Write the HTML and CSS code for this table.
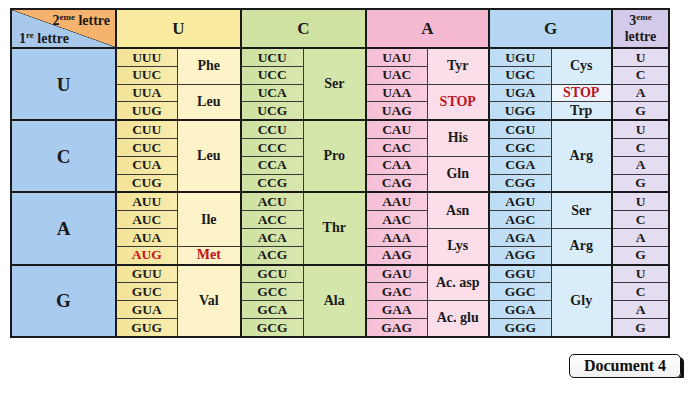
FILE: index.html
```html
<!DOCTYPE html>
<html lang="fr">
<head>
<meta charset="utf-8">
<title>Code génétique</title>
<link rel="stylesheet" href="styles.css">
</head>
<body>
<div class="page">
<table class="code">
<colgroup>
<col class="c-first"><col class="c-codu"><col class="c-aau"><col class="c-codc"><col class="c-aac"><col class="c-coda"><col class="c-aaa"><col class="c-codg"><col class="c-aag"><col class="c-third">
</colgroup>
<thead>
<tr class="head">
<th class="corner"><div class="corner-in"><span class="l2">2<sup>eme</sup> lettre</span><span class="l1">1<sup>re</sup> lettre</span></div></th>
<th colspan="2" class="hy gsep">U</th>
<th colspan="2" class="hg gsep">C</th>
<th colspan="2" class="hp gsep">A</th>
<th colspan="2" class="hb gsep">G</th>
<th class="hv third-h">3<sup>eme</sup><br>lettre</th>
</tr>
</thead>
<tbody>
<!-- U -->
<tr class="grp">
<td rowspan="4" class="first">U</td>
<td class="cy">UUU</td><td rowspan="2" class="ay gsep">Phe</td>
<td class="cg">UCU</td><td rowspan="4" class="ag gsep">Ser</td>
<td class="cp">UAU</td><td rowspan="2" class="ap gsep">Tyr</td>
<td class="cb">UGU</td><td rowspan="2" class="ab gsep">Cys</td>
<td class="v">U</td>
</tr>
<tr><td class="cy">UUC</td><td class="cg">UCC</td><td class="cp">UAC</td><td class="cb">UGC</td><td class="v">C</td></tr>
<tr><td class="cy">UUA</td><td rowspan="2" class="ay gsep">Leu</td><td class="cg">UCA</td><td class="cp">UAA</td><td rowspan="2" class="ap gsep red">STOP</td><td class="cb">UGA</td><td class="aw gsep red">STOP</td><td class="v">A</td></tr>
<tr><td class="cy">UUG</td><td class="cg">UCG</td><td class="cp">UAG</td><td class="cb">UGG</td><td class="ab gsep">Trp</td><td class="v">G</td></tr>
<!-- C -->
<tr class="grp">
<td rowspan="4" class="first">C</td>
<td class="cy">CUU</td><td rowspan="4" class="ay gsep">Leu</td>
<td class="cg">CCU</td><td rowspan="4" class="ag gsep">Pro</td>
<td class="cp">CAU</td><td rowspan="2" class="ap gsep">His</td>
<td class="cb">CGU</td><td rowspan="4" class="ab gsep">Arg</td>
<td class="v">U</td>
</tr>
<tr><td class="cy">CUC</td><td class="cg">CCC</td><td class="cp">CAC</td><td class="cb">CGC</td><td class="v">C</td></tr>
<tr><td class="cy">CUA</td><td class="cg">CCA</td><td class="cp">CAA</td><td rowspan="2" class="ap gsep">Gln</td><td class="cb">CGA</td><td class="v">A</td></tr>
<tr><td class="cy">CUG</td><td class="cg">CCG</td><td class="cp">CAG</td><td class="cb">CGG</td><td class="v">G</td></tr>
<!-- A -->
<tr class="grp">
<td rowspan="4" class="first">A</td>
<td class="cy">AUU</td><td rowspan="3" class="ay gsep">Ile</td>
<td class="cg">ACU</td><td rowspan="4" class="ag gsep">Thr</td>
<td class="cp">AAU</td><td rowspan="2" class="ap gsep">Asn</td>
<td class="cb">AGU</td><td rowspan="2" class="ab gsep">Ser</td>
<td class="v">U</td>
</tr>
<tr><td class="cy">AUC</td><td class="cg">ACC</td><td class="cp">AAC</td><td class="cb">AGC</td><td class="v">C</td></tr>
<tr><td class="cy">AUA</td><td class="cg">ACA</td><td class="cp">AAA</td><td rowspan="2" class="ap gsep">Lys</td><td class="cb">AGA</td><td rowspan="2" class="ab gsep">Arg</td><td class="v">A</td></tr>
<tr><td class="cy red">AUG</td><td class="ay gsep red">Met</td><td class="cg">ACG</td><td class="cp">AAG</td><td class="cb">AGG</td><td class="v">G</td></tr>
<!-- G -->
<tr class="grp">
<td rowspan="4" class="first">G</td>
<td class="cy">GUU</td><td rowspan="4" class="ay gsep">Val</td>
<td class="cg">GCU</td><td rowspan="4" class="ag gsep">Ala</td>
<td class="cp">GAU</td><td rowspan="2" class="ap gsep">Ac. asp</td>
<td class="cb">GGU</td><td rowspan="4" class="ab gsep">Gly</td>
<td class="v">U</td>
</tr>
<tr><td class="cy">GUC</td><td class="cg">GCC</td><td class="cp">GAC</td><td class="cb">GGC</td><td class="v">C</td></tr>
<tr><td class="cy">GUA</td><td class="cg">GCA</td><td class="cp">GAA</td><td rowspan="2" class="ap gsep">Ac. glu</td><td class="cb">GGA</td><td class="v">A</td></tr>
<tr><td class="cy">GUG</td><td class="cg">GCG</td><td class="cp">GAG</td><td class="cb">GGG</td><td class="v">G</td></tr>
</tbody>
</table>
<div class="doc-row"><div class="doc">Document 4</div></div>
</div>
</body>
</html>
```
FILE: styles.css
```css
html, body {
  margin: 0;
  padding: 0;
  background: #ffffff;
}
.page {
  padding: 8px 0 0 10px;
  width: 674px;
  font-family: "Liberation Serif", "DejaVu Serif", serif;
  font-weight: bold;
  color: #1a1a1a;
}
.code {
  border-collapse: collapse;
  table-layout: fixed;
  border: 2px solid #1a1a1a;
}
.c-first { width: 105px; }
.c-codu { width: 61px; }
.c-aau { width: 64px; }
.c-codc { width: 62px; }
.c-aac { width: 63px; }
.c-coda { width: 61px; }
.c-aaa { width: 62px; }
.c-codg { width: 62px; }
.c-aag { width: 61px; }
.c-third { width: 57px; }

.code th, .code td {
  border: 1px solid #3a3a3a;
  padding: 0;
  text-align: center;
  vertical-align: middle;
  line-height: 1;
}
.code td {
  height: 16.8px;
  font-size: 13.5px;
}
.head th {
  height: 36px;
  font-size: 17px;
  border-bottom: 2px solid #1a1a1a;
}
.grp td {
  border-top: 2px solid #1a1a1a;
}
.code .gsep {
  border-right: 2px solid #1a1a1a;
}
.code .first {
  background: #a9cbee;
  font-size: 19px;
  border-right: 2px solid #1a1a1a;
}
.code .corner {
  border-right: 2px solid #1a1a1a;
  background: linear-gradient(to top right, #a8c8ea 0%, #a8c8ea calc(50% - 0.6px), #3a3a3a 50%, #f5b26c calc(50% + 0.6px), #f7b46e 100%);
  font-size: 14px;
}
.corner-in {
  display: flex;
  flex-direction: column;
  height: 37px;
  justify-content: space-between;
  padding: 4px 5px 1px 7px;
  box-sizing: border-box;
}
.corner sup, .third-h sup {
  font-size: 9px;
  vertical-align: 5px;
  line-height: 0;
}
.l2 { align-self: flex-end; }
.l1 { align-self: flex-start; }

.hy { background: #f8eb9f; }
.hg { background: #cfe2a1; }
.hp { background: #f4b8d1; }
.hb { background: #b5d6f3; }
.hv { background: #d3c9e8; }
.code .third-h {
  font-size: 14px;
  line-height: 1.1;
}

.cy { background: linear-gradient(to right, #f3e398, #f8ecae); }
.cg { background: linear-gradient(to right, #cfe1a2, #d7e7ae); }
.cp { background: linear-gradient(to right, #f5bfd6, #f9cde0); }
.cb { background: linear-gradient(to right, #bddcf4, #c8e3f7); }
.code .ay, .code .ag, .code .ap, .code .ab, .code .aw { font-size: 14px; }
.ay { background: #fcf3c9; }
.ag { background: #d5e6aa; }
.ap { background: #fcdeea; }
.ab { background: #d9ecfa; }
.aw { background: #eef6fc; }
.v { background: #e4dcf1; }
.red { color: #c0141c; }

.doc-row {
  display: flex;
  justify-content: flex-end;
  margin-top: 16px;
}
.doc {
  width: 110px;
  height: 22px;
  border: 1.5px solid #111;
  border-radius: 5px;
  box-shadow: 3px 3px 0 #111;
  background: linear-gradient(#ffffff, #f1f1f1);
  font-size: 16px;
  display: flex;
  align-items: center;
  justify-content: center;
  color: #111;
  margin-right: 3px;
}
```
